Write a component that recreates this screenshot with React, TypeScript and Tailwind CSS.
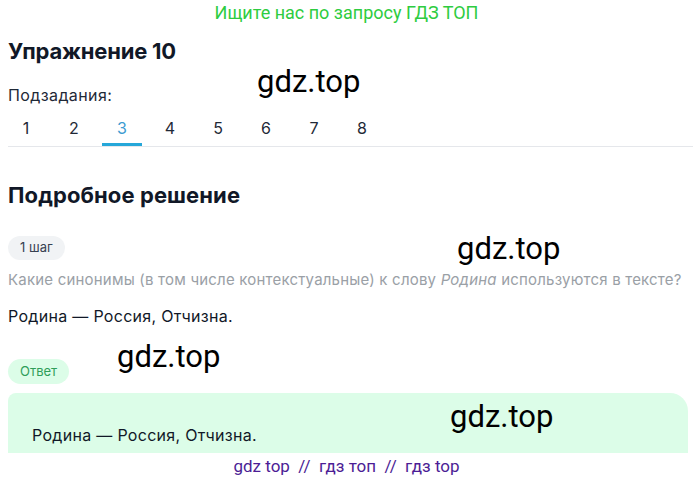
import React from "react";

const tabs = ["1", "2", "3", "4", "5", "6", "7", "8"];

function Mark({ className }: { className: string }) {
  return (
    <div
      className={`absolute text-[31px] leading-none text-black pointer-events-none ${className}`}
      style={{ fontFamily: "Roboto, sans-serif" }}
    >
      gdz.top
    </div>
  );
}

export default function App() {
  return (
    <div
      className="relative w-[693px] h-[481px] overflow-hidden bg-white text-[#111827]"
      style={{ fontFamily: "Inter, 'Noto Sans', sans-serif" }}
    >
      {/* top banner */}
      <div
        className="h-[24px] flex items-center justify-center text-[18px] text-[#2ecc40]"
        style={{ fontFamily: "Roboto, sans-serif" }}
      >
        Ищите нас по запросу ГДЗ ТОП
      </div>

      <div className="pl-2">
        <h1 className="mt-[13px] text-[22px] font-bold leading-[28px] tracking-[-0.2px]">Упражнение 10</h1>
        <div className="mt-[19px] text-[16px] leading-[22px] tracking-[0.4px] text-[#1f2937]">Подзадания:</div>

        {/* subtask tabs */}
        <div className="mt-[3px] border-b border-[#e5e7eb]">
          <div className="-ml-[2px] flex gap-[8px]">
            {tabs.map((t) => (
              <div
                key={t}
                className={`w-[40px] h-[37px] flex items-center justify-center text-[16px] ${
                  t === "3"
                    ? "text-[#3d9bd1] border-b-[3px] border-[#25a7d9] pt-[3px] -mb-px"
                    : "text-[#1f2937]"
                }`}
              >
                {t}
              </div>
            ))}
          </div>
        </div>

        <h2 className="mt-[34px] text-[22px] font-bold leading-[28px] tracking-[0.1px]">Подробное решение</h2>

        <div className="mt-[27px] inline-flex h-[24px] items-center rounded-full bg-[#f1f3f5] px-[12px] text-[13px] text-[#374151]">
          1 шаг
        </div>
        <p className="mt-[10px] text-[15px] leading-[20px] tracking-[0.2px] text-[#9aa0a6]">
          Какие синонимы (в том числе контекстуальные) к слову <i>Родина</i> используются в тексте?
        </p>
        <p className="mt-[15px] text-[16px] leading-[22px] tracking-[0.3px] text-[#111827]">Родина — Россия, Отчизна.</p>

        <div className="mt-[32px] inline-flex h-[25px] items-center rounded-full bg-[#dcfde8] px-[12px] text-[13px] text-[#2f9e5a]">
          Ответ
        </div>
        <div className="mt-[9px] mr-[5px] h-[60px] rounded-tr-[18px] rounded-tl-[8px] bg-[#dcfde8] pl-[24px] pt-[31px] text-[16px] leading-[22px] tracking-[0.3px] text-[#111827]">
          Родина — Россия, Отчизна.
        </div>
      </div>

      {/* footer */}
      <div
        className="mt-[2px] text-center text-[17px] leading-[22px] text-[#4c1d95]"
        style={{ fontFamily: "Roboto, sans-serif" }}
      >
        gdz top&nbsp; //&nbsp; гдз топ&nbsp; //&nbsp; гдз top
      </div>

      <Mark className="left-[257px] top-[66px]" />
      <Mark className="left-[457px] top-[233px]" />
      <Mark className="left-[117px] top-[341px]" />
      <Mark className="left-[450px] top-[401px]" />
    </div>
  );
}
